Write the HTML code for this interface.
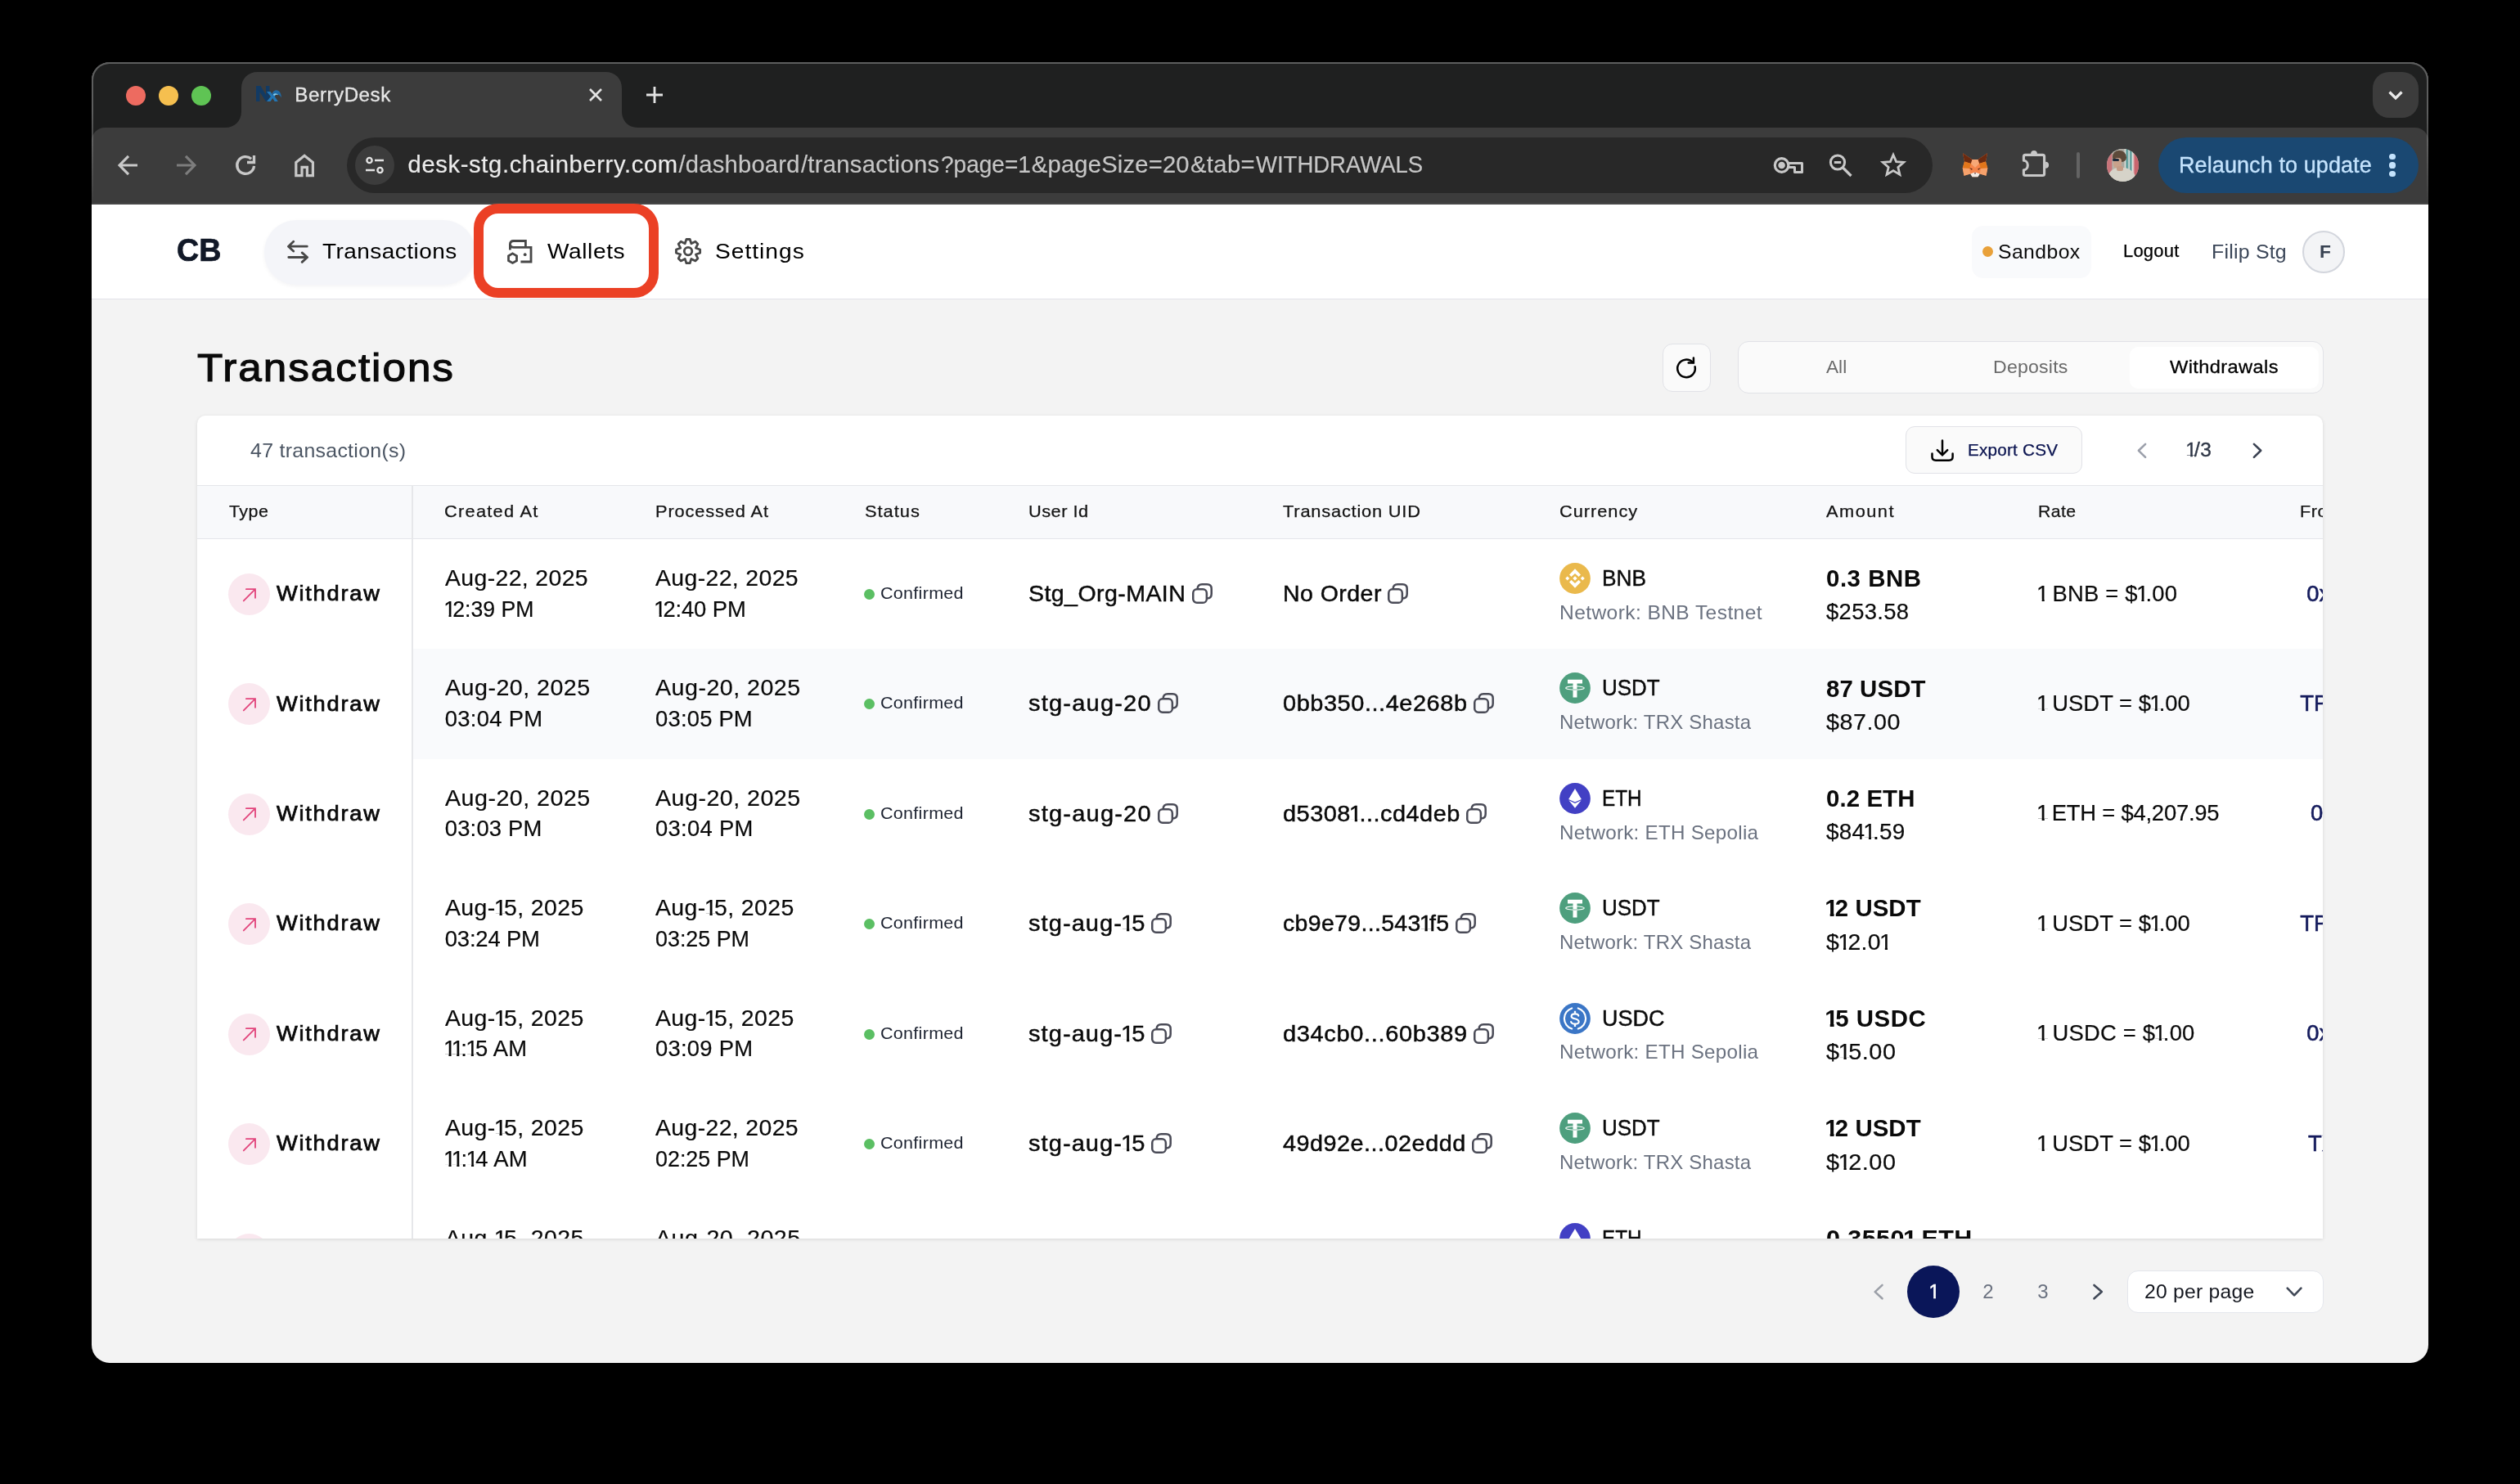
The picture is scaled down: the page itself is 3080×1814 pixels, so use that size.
<!DOCTYPE html>
<html lang="en"><head><meta charset="utf-8"><title>BerryDesk</title><style>
html,body{margin:0;padding:0;background:#000;}
body{width:3080px;height:1814px;position:relative;overflow:hidden;font-family:"Liberation Sans",sans-serif;}
.b{position:absolute;display:block;}
#root{position:absolute;left:0;top:0;width:3080px;height:1814px;will-change:transform;}
.t{position:absolute;white-space:nowrap;line-height:1;transform-origin:0 50%;}
.o,.ob{display:inline-block;margin:0 -.14em 0 -.07em;clip-path:polygon(0 0,1em 0,1em .748em,.352em .748em,.352em 1.3em,.24em 1.3em,.24em .748em,0 .748em);}
.ob{margin:0 -.13em 0 -.06em;clip-path:polygon(0 0,1em 0,1em .722em,.385em .722em,.385em 1.3em,.22em 1.3em,.22em .722em,0 .722em);}
</style></head><body><div id="root">
<div class="b" style="left:112px;top:76px;width:2856px;height:1590px;border-radius:22px;overflow:hidden;background:#f3f3f3;">
<div class="b" style="left:-112px;top:-76px;width:3080px;height:1814px;">
<div class="b" style="left:112.0px;top:76.0px;width:2856.0px;height:110.0px;background:#1f2020;"></div>
<div class="b" style="left:112.0px;top:156.0px;width:2856.0px;height:94.0px;background:#3c3c3c;border-radius:16px 16px 0 0;"></div>
<div class="b" style="left:112.0px;top:248.0px;width:2856.0px;height:2.0px;background:#464646;"></div>
<svg class="b" style="left:270.0px;top:88.0px;" width="520" height="68" viewBox="0 0 520 68" fill="none"><path d="M5 68 C17 68 25 60 25 48 L25 20 C25 8 33 0 45 0 L470 0 C482 0 490 8 490 20 L490 48 C490 60 498 68 510 68 Z" fill="#3c3c3c"/></svg>
<div class="b" style="left:154.0px;top:105.0px;width:24.0px;height:24.0px;background:#ed6b60;border-radius:12px;"></div>
<div class="b" style="left:194.0px;top:105.0px;width:24.0px;height:24.0px;background:#f5bf4f;border-radius:12px;"></div>
<div class="b" style="left:234.0px;top:105.0px;width:24.0px;height:24.0px;background:#5fc454;border-radius:12px;"></div>
<svg class="b" style="left:312.0px;top:103.0px;" width="34" height="24" viewBox="0 0 34 24" fill="none"><path d="M1 2 L6.5 2 L13 13 L13 2 L17.5 2 L17.5 21 L13 21 L5.5 9.5 L5.5 21 L1 21 Z" fill="#123a63"/><path d="M14 9 L18.5 9 L21.5 13.2 L24.5 9 L27.5 9 L23.8 15 L27.800 21 L23.600 21 L21.3 17 L18.5 21 L14 21 L19 15 Z" fill="#2276b5"/><path d="M20.5 11.500 C23 5.200 31.500 5.200 32 16.800 C30 11.800 25.500 10.800 22.800 14 Z" fill="#1f6aa5"/><path d="M21.800 12.600 C23.800 10.600 26.600 10.800 28.200 13.300 C26.200 12.200 24.400 12.600 23 14.200 Z" fill="#8fd0ea"/></svg>
<div class="t" style="left:360.30px;top:103.91px;font-size:24.2px;color:#e6e6e6;letter-spacing:0.512px;-webkit-text-stroke:0.3px #e6e6e6;">BerryDesk</div>
<svg class="b" style="left:718.0px;top:106.0px;" width="20" height="20" viewBox="0 0 20 20" fill="none"><path d="M3 3 L17 17 M17 3 L3 17" stroke="#e3e3e3" stroke-width="2.6" stroke-linecap="butt"/></svg>
<svg class="b" style="left:788.0px;top:104.0px;" width="24" height="24" viewBox="0 0 24 24" fill="none"><path d="M12 2 L12 22 M2 12 L22 12" stroke="#e3e3e3" stroke-width="2.8"/></svg>
<div class="b" style="left:2900.0px;top:88.0px;width:56.0px;height:56.0px;background:#3c3c3c;border-radius:20px;"></div>
<svg class="b" style="left:2916.0px;top:104.0px;" width="24" height="24" viewBox="0 0 24 24" fill="none"><path d="M4.5 8.5 L12 16 L19.5 8.5" stroke="#eaeaea" stroke-width="3.2"/></svg>
<svg class="b" style="left:142.0px;top:188.0px;" width="28" height="28" viewBox="0 0 28 28" fill="none"><path d="M26 14 L5 14 M15 2.800 L4 14 L15 25.200" stroke="#c8c8c8" stroke-width="3.1" stroke-linejoin="miter"/></svg>
<svg class="b" style="left:214.0px;top:188.0px;" width="28" height="28" viewBox="0 0 28 28" fill="none"><path d="M2 14 L23 14 M13 2.800 L24 14 L13 25.200" stroke="#7d7d7d" stroke-width="3.1"/></svg>
<svg class="b" style="left:286.0px;top:188.0px;" width="28" height="28" viewBox="0 0 28 28" fill="none"><path d="M24.51 14.91 A10.4 10.4 0 1 1 21.11 6.27" stroke="#c8c8c8" stroke-width="3.3"/><path d="M24.500 1.900 L24.500 10.500 L16 10.500" stroke="#c8c8c8" stroke-width="3.3" fill="none" stroke-linejoin="miter"/></svg>
<svg class="b" style="left:358.0px;top:186.0px;" width="28" height="32" viewBox="0 0 28 32" fill="none"><path d="M3.800 28.600 L3.800 12.400 L14.100 4.200 L24.400 12.400 L24.400 28.600 L17.400 28.600 L17.400 18.400 L11 18.400 L11 28.600 Z" stroke="#c8c8c8" stroke-width="3.2" stroke-linejoin="miter"/></svg>
<div class="b" style="left:424.0px;top:168.0px;width:1938.0px;height:68.0px;background:#282828;border-radius:34px;"></div>
<div class="b" style="left:434.0px;top:178.0px;width:48.0px;height:48.0px;background:#3c3c3c;border-radius:24px;"></div>
<svg class="b" style="left:444.0px;top:188.0px;" width="28" height="28" viewBox="0 0 28 28" fill="none"><circle cx="7.5" cy="8" r="3.1" stroke="#e3e3e3" stroke-width="2.4"/><path d="M14 8 L25 8" stroke="#e3e3e3" stroke-width="2.4"/><circle cx="20.5" cy="20" r="3.1" stroke="#e3e3e3" stroke-width="2.4"/><path d="M3 20 L14 20" stroke="#e3e3e3" stroke-width="2.4"/></svg>
<div class="t" style="left:498.60px;top:187.08px;font-size:29.2px;color:#ececec;letter-spacing:0.624px;-webkit-text-stroke:0.2px #ececec;">desk-stg.chainberry.com</div>
<div class="t" style="left:829.50px;top:187.08px;font-size:29.2px;color:#c6c6c6;letter-spacing:0.215px;-webkit-text-stroke:0.2px #c6c6c6;">/dashboard</div>
<div class="t" style="left:978.90px;top:187.08px;font-size:29.2px;color:#c6c6c6;letter-spacing:0.310px;-webkit-text-stroke:0.2px #c6c6c6;">/transactions</div>
<div class="t" style="left:1149.50px;top:187.08px;font-size:29.2px;color:#c6c6c6;-webkit-text-stroke:0.2px #c6c6c6;transform:scaleX(0.9602);">?page=1</div>
<div class="t" style="left:1260.80px;top:187.08px;font-size:29.2px;color:#c6c6c6;letter-spacing:0.191px;-webkit-text-stroke:0.2px #c6c6c6;">&amp;pageSize=20</div>
<div class="t" style="left:1455.00px;top:187.08px;font-size:29.2px;color:#c6c6c6;letter-spacing:0.377px;-webkit-text-stroke:0.2px #c6c6c6;">&amp;tab=</div>
<div class="t" style="left:1535.00px;top:187.08px;font-size:29.2px;color:#c6c6c6;-webkit-text-stroke:0.2px #c6c6c6;transform:scaleX(0.9421);">WITHDRAWALS</div>
<svg class="b" style="left:2166.0px;top:188.0px;" width="40" height="28" viewBox="0 0 40 28" fill="none"><circle cx="11.6" cy="14" r="8.3" stroke="#c8c8c8" stroke-width="3.2"/><circle cx="11.6" cy="14" r="4.3" fill="#c8c8c8"/><path d="M19.6 11.4 L36.5 11.4 L36.5 22.400 L27.5 22.400 L27.5 16.6 L19.600 16.6" stroke="#c8c8c8" stroke-width="3" stroke-linejoin="round"/></svg>
<svg class="b" style="left:2233.2px;top:185.6px;" width="32" height="32" viewBox="0 0 32 32" fill="none"><circle cx="13" cy="12.5" r="8.600" stroke="#c8c8c8" stroke-width="3"/><path d="M19.500 19 L29.500 29" stroke="#c8c8c8" stroke-width="3.200"/><path d="M8.800 12.500 L17.200 12.500" stroke="#c8c8c8" stroke-width="3"/></svg>
<svg class="b" style="left:2297.0px;top:185.0px;" width="34" height="32" viewBox="0 0 34 32" fill="none"><g transform="translate(17 17) scale(0.925) translate(-17 -17)"><path d="M17 3.2 L20.9 12.3 L30.8 13.1 L23.3 19.6 L25.6 29.3 L17 24.1 L8.4 29.3 L10.7 19.6 L3.2 13.1 L13.1 12.3 Z" stroke="#c8c8c8" stroke-width="3" stroke-linejoin="miter"/></g></svg>
<svg class="b" style="left:2398.0px;top:186.0px;" width="32" height="32" viewBox="0 0 32 32" fill="none"><path d="M1 1.3 L12.500 9 L19.500 9 L31 1.300 L29 11.500 L31.300 19.500 L29.500 28.700 L21.700 26.500 L19.500 30.300 L12.500 30.300 L10.300 26.500 L2.500 28.700 L0.700 19.500 L3 11.500 Z" fill="#f5844b"/><path d="M1 1.300 L12.500 9 L11 14 L3 11.500 Z" fill="#6b2a10"/><path d="M31 1.300 L19.500 9 L21 14 L29 11.500 Z" fill="#6b2a10"/><path d="M11 14 L12.500 9 L19.500 9 L21 14 L16 19 Z" fill="#f7a877"/><path d="M3 11.500 L11 14 L9 20 L0.700 19.500 Z" fill="#e2761b"/><path d="M29 11.500 L21 14 L23 20 L31.300 19.500 Z" fill="#e2761b"/><path d="M2.500 28.700 L10.300 26.500 L9 20 L0.700 19.500 Z" fill="#f6a26c"/><path d="M29.500 28.700 L21.700 26.500 L23 20 L31.300 19.500 Z" fill="#f6a26c"/><path d="M10.300 26.500 L16 24.500 L21.700 26.500 L19.500 30.300 L12.500 30.300 Z" fill="#f1ece8"/><path d="M9 19 L12.700 20.200 L12 22 Z M23 19 L19.300 20.200 L20 22 Z" fill="#5a2a14"/><path d="M14.800 25.300 L17.200 25.300 L16 27 Z" fill="#5a1a10"/></svg>
<svg class="b" style="left:2470.0px;top:183.0px;" width="38" height="36" viewBox="0 0 38 36" fill="none"><path d="M3.4 13.2 L3.4 8.4 Q3.4 6.4 5.4 6.4 L26.6 6.4 Q28.6 6.4 28.6 8.4 L28.6 29.5 Q28.6 31.5 26.6 31.5 L5.4 31.5 Q3.4 31.5 3.4 29.5 L3.4 24.700 A4.900 5.750 0 0 0 3.400 13.200 Z" stroke="#c8c8c8" stroke-width="3.1" stroke-linejoin="round"/><path d="M12.1 4.900 A3.900 3.900 0 0 1 19.900 4.900 Z M30.100 14.800 A4 4 0 0 1 30.100 22.800 Z" fill="#c8c8c8"/></svg>
<div class="b" style="left:2537.9px;top:186.0px;width:3.9px;height:31.8px;background:#636363;border-radius:2px;"></div>
<div class="b" style="left:2574.5px;top:182px;width:39.6px;height:39.6px;border-radius:20px;overflow:hidden;background:#b9b5ad;"><div class="b" style="left:0;top:0;width:40px;height:40px;background:linear-gradient(90deg,#c8747a 0,#c8747a 14%,#b8b4aa 18%,#aaa79e 52%,#dcdcd6 56%,#3f8f8c 62%,#dfe0dc 68%,#3f8f8c 73%,#e4e4e0 79%,#c9656e 86%,#c9656e 100%);"></div><div class="b" style="left:7.5px;top:2.4px;width:17px;height:14px;border-radius:8px 9px 6px 6px;background:#5d4a3a;"></div><div class="b" style="left:8.3px;top:10.5px;width:10.5px;height:13.5px;border-radius:5px 4px 5px 5px;background:#c9a28b;"></div><div class="b" style="left:7.2px;top:12px;width:8px;height:3.2px;border-radius:1.5px;background:#1c2b3d;"></div><div class="b" style="left:1.5px;top:22.5px;width:35px;height:20px;border-radius:14px 16px 0 0;background:#d6d3c9;"></div><div class="b" style="left:12px;top:21px;width:8px;height:6px;border-radius:2px;background:#c49c86;"></div></div>
<div class="b" style="left:2638.0px;top:168.0px;width:318.0px;height:68.0px;background:#1a4872;border-radius:34px;"></div>
<div class="t" style="left:2663.00px;top:189.14px;font-size:27px;color:#c4e3fd;letter-spacing:0.089px;-webkit-text-stroke:0.35px #c4e3fd;">Relaunch to update</div>
<div class="b" style="left:2920.4px;top:187.5px;width:7.2px;height:7.2px;background:#c4e3fd;border-radius:3.6px;"></div>
<div class="b" style="left:2920.4px;top:198.4px;width:7.2px;height:7.2px;background:#c4e3fd;border-radius:3.6px;"></div>
<div class="b" style="left:2920.4px;top:209.3px;width:7.2px;height:7.2px;background:#c4e3fd;border-radius:3.6px;"></div>
<div class="b" style="left:112px;top:76px;width:2856px;height:300px;border-radius:22px;box-sizing:border-box;border:2px solid rgba(255,255,255,0.28);border-bottom:none;-webkit-mask-image:linear-gradient(#000 0,#000 60px,transparent 176px);"></div>
<div class="b" style="left:112.0px;top:250.0px;width:2856.0px;height:115.2px;background:#fff;"></div>
<div class="b" style="left:112.0px;top:365.0px;width:2856.0px;height:1.2px;background:#e3e3e9;"></div>
<div class="t" style="left:215.60px;top:287.12px;font-size:38.6px;color:#111827;font-weight:700;-webkit-text-stroke:0.7px #111827;transform:scaleX(0.9761);">CB</div>
<div class="b" style="left:323.0px;top:269.0px;width:258.0px;height:78.6px;background:#f4f5f9;border-radius:39.3px;box-shadow:0 2px 5px rgba(20,20,60,0.05);"></div>
<div class="t" style="left:394.00px;top:293.68px;font-size:26.6px;color:#000;letter-spacing:0.451px;transform:scaleX(1.0517);">Transactions</div>
<div class="t" style="left:669.00px;top:293.68px;font-size:26.6px;color:#000;letter-spacing:0.529px;transform:scaleX(1.0584);">Wallets</div>
<div class="t" style="left:873.80px;top:293.68px;font-size:26.6px;color:#000;letter-spacing:0.935px;transform:scaleX(1.0600);">Settings</div>
<svg class="b" style="left:340.0px;top:280.0px;" width="60" height="56" viewBox="0 0 60 56" fill="none"><path d="M35.3 21.2 L12.8 21.2 M18.7 15.3 L12.5 21.2 L18.7 27.1 M12.8 34.5 L35.3 34.5 M29.2 28.9 L35.6 34.5 L29.2 40.4" stroke="#484848" stroke-width="2.8" stroke-linecap="round" stroke-linejoin="round"/></svg>
<svg class="b" style="left:610.0px;top:280.0px;" width="60" height="56" viewBox="0 0 60 56" fill="none"><path d="M13.4 25.6 L13.4 18.8 Q13.4 14.5 17.8 14.5 L32.4 14.5 L32.4 22.4 M13.4 18.4 Q13.6 22.4 18 22.4 L39 22.4 L39 40 L26.4 40" stroke="#484848" stroke-width="2.8" stroke-linejoin="miter"/><circle cx="31.7" cy="31.2" r="1.9" fill="#484848"/><path d="M16.5 29.9 L21.5 32.8 L21.5 38.6 L16.5 41.5 L11.5 38.6 L11.5 32.8 Z" stroke="#484848" stroke-width="2.8" stroke-linejoin="miter"/></svg>
<svg class="b" style="left:812.0px;top:280.0px;" width="60" height="56" viewBox="0 0 60 56" fill="none"><path d="M26.93 12.50 L31.19 12.50 L32.93 17.77 L37.87 15.27 L40.89 18.29 L38.39 23.23 L43.66 24.97 L43.66 29.23 L38.39 30.97 L40.89 35.91 L37.87 38.93 L32.93 36.43 L31.19 41.70 L26.93 41.70 L25.19 36.43 L20.25 38.93 L17.23 35.91 L19.73 30.97 L14.46 29.23 L14.46 24.97 L19.73 23.23 L17.23 18.29 L20.25 15.27 L25.19 17.77 Z" stroke="#484848" stroke-width="2.8" stroke-linejoin="round"/><circle cx="29.06" cy="27.1" r="4.75" stroke="#484848" stroke-width="2.8"/></svg>
<div class="b" style="left:579.0px;top:248.5px;width:225.5px;height:115.8px;background:transparent;border-radius:30px;border:12.3px solid #eb4025;box-sizing:border-box;"></div>
<div class="b" style="left:2410.0px;top:276.0px;width:146.0px;height:63.5px;background:#f9fafc;border-radius:14px;"></div>
<div class="b" style="left:2422.7px;top:301.0px;width:13.3px;height:13.3px;background:#e9a13a;border-radius:7px;"></div>
<div class="t" style="left:2442.40px;top:295.55px;font-size:23.8px;color:#0b0b0b;letter-spacing:0.400px;transform:scaleX(1.0399);">Sandbox</div>
<div class="t" style="left:2595.00px;top:297.28px;font-size:21.4px;color:#000;letter-spacing:0.223px;-webkit-text-stroke:0.25px #000;transform:scaleX(1.0262);">Logout</div>
<div class="t" style="left:2702.60px;top:295.91px;font-size:24.2px;color:#3b4658;letter-spacing:0.210px;transform:scaleX(1.0297);">Filip Stg</div>
<div class="b" style="left:2814.0px;top:281.6px;width:52.0px;height:52.0px;background:#f3f4f6;border-radius:26px;border:2.6px solid #d3d6dd;box-sizing:border-box;"></div>
<div class="t" style="left:2835.00px;top:296.40px;font-size:22.8px;color:#384252;font-weight:700;">F</div>
<div class="t" style="left:240.80px;top:424.52px;font-size:48.4px;color:#0a0a0a;letter-spacing:1.823px;-webkit-text-stroke:1.15px #0a0a0a;transform:scaleX(1.0600);">Transactions</div>
<div class="b" style="left:2032.3px;top:420.2px;width:58.5px;height:58.5px;background:#fafafa;border-radius:12px;border:1.2px solid #e1e2e7;box-sizing:border-box;"></div>
<svg class="b" style="left:2026.0px;top:414.0px;" width="72" height="72" viewBox="0 0 72 72" fill="none"><path d="M45.63 34.25 A10.8 10.8 0 1 1 43.08 29.17" stroke="#000" stroke-width="2.5" stroke-linecap="round"/><path d="M43.9 23.6 L43.9 29.6 L37.7 29.6" stroke="#000" stroke-width="2.5" stroke-linecap="round" stroke-linejoin="miter"/></svg>
<div class="b" style="left:2123.6px;top:417.2px;width:716.0px;height:63.4px;background:#fafafa;border-radius:13px;border:1.2px solid #e1e2e7;box-sizing:border-box;"></div>
<div class="b" style="left:2603.0px;top:424.0px;width:231.0px;height:50.6px;background:#fff;border-radius:10px;"></div>
<div class="t" style="left:2232.05px;top:437.66px;font-size:22.6px;color:#6a6a6a;">All</div>
<div class="t" style="left:2435.70px;top:437.66px;font-size:22.6px;color:#6a6a6a;letter-spacing:0.195px;transform:scaleX(1.0238);">Deposits</div>
<div class="t" style="left:2651.80px;top:437.66px;font-size:22.6px;color:#000;letter-spacing:0.361px;-webkit-text-stroke:0.3px #000;transform:scaleX(1.0461);">Withdrawals</div>
<div class="b" style="left:240.8px;top:508px;width:2598.2px;height:1006px;border-radius:10px 10px 0 0;background:#fff;box-shadow:0 1px 4px rgba(0,0,0,0.12);overflow:hidden;">
<div class="b" style="left:-240.8px;top:-508px;width:3080px;height:1814px;">
<div class="t" style="left:305.70px;top:539.28px;font-size:24px;color:#4b5563;letter-spacing:0.271px;transform:scaleX(1.0378);">47 transaction(s)</div>
<div class="b" style="left:2328.5px;top:521.3px;width:216.3px;height:58.2px;background:#fafafa;border-radius:11px;border:1.2px solid #e1e2e7;box-sizing:border-box;"></div>
<div class="t" style="left:2404.80px;top:539.60px;font-size:20.2px;color:#0b1450;letter-spacing:0.196px;-webkit-text-stroke:0.25px #0b1450;transform:scaleX(1.0258);">Export CSV</div>
<div class="t" style="left:2673.20px;top:539.34px;font-size:23.1px;color:#2f3747;letter-spacing:0.495px;-webkit-text-stroke:0.4px #2f3747;transform:scaleX(1.0576);"><span class="o">1</span>/3</div>
<svg class="b" style="left:2320.0px;top:514.0px;" width="100" height="72" viewBox="0 0 100 72" fill="none"><path d="M54 24.4 L54 42 M47.8 36.1 L54 42.3 L60.2 36.1 M41.5 40.6 L41.5 44.6 Q41.5 48.8 46 48.8 L62.1 48.8 Q66.6 48.8 66.6 44.6 L66.6 40.600" stroke="#000" stroke-width="2.5" stroke-linecap="round" stroke-linejoin="miter"/></svg>
<svg class="b" style="left:2590.0px;top:520.0px;" width="200" height="60" viewBox="0 0 200 60" fill="none"><path d="M32.1 22.9 L23.9 30.8 L32.100 38.9" stroke="#9ca0ab" stroke-width="2.6" stroke-linecap="round" stroke-linejoin="round"/><path d="M164.9 22.9 L173.2 30.8 L164.900 38.9" stroke="#3b4252" stroke-width="2.6" stroke-linecap="round" stroke-linejoin="round"/></svg>
<div class="b" style="left:240.8px;top:593.0px;width:2600.0px;height:65.4px;background:#f8f9fb;"></div>
<div class="b" style="left:240.8px;top:592.8px;width:2600.0px;height:1.2px;background:#e4e6ea;"></div>
<div class="b" style="left:240.8px;top:657.6px;width:2600.0px;height:1.2px;background:#e4e6ea;"></div>
<div class="t" style="left:280.00px;top:614.56px;font-size:20.6px;color:#141414;letter-spacing:0.414px;-webkit-text-stroke:0.25px #141414;transform:scaleX(1.0436);">Type</div>
<div class="t" style="left:543.20px;top:614.56px;font-size:20.6px;color:#141414;letter-spacing:1.169px;-webkit-text-stroke:0.25px #141414;transform:scaleX(1.0600);">Created At</div>
<div class="t" style="left:801.00px;top:614.56px;font-size:20.6px;color:#141414;letter-spacing:0.804px;-webkit-text-stroke:0.25px #141414;transform:scaleX(1.0600);">Processed At</div>
<div class="t" style="left:1056.80px;top:614.56px;font-size:20.6px;color:#141414;letter-spacing:0.926px;-webkit-text-stroke:0.25px #141414;transform:scaleX(1.0600);">Status</div>
<div class="t" style="left:1256.80px;top:614.56px;font-size:20.6px;color:#141414;letter-spacing:0.444px;-webkit-text-stroke:0.25px #141414;transform:scaleX(1.0600);">User Id</div>
<div class="t" style="left:1567.50px;top:614.56px;font-size:20.6px;color:#141414;letter-spacing:0.747px;-webkit-text-stroke:0.25px #141414;transform:scaleX(1.0600);">Transaction UID</div>
<div class="t" style="left:1906.20px;top:614.56px;font-size:20.6px;color:#141414;letter-spacing:0.895px;-webkit-text-stroke:0.25px #141414;transform:scaleX(1.0600);">Currency</div>
<div class="t" style="left:2232.00px;top:614.56px;font-size:20.6px;color:#141414;letter-spacing:1.369px;-webkit-text-stroke:0.25px #141414;transform:scaleX(1.0600);">Amount</div>
<div class="t" style="left:2491.00px;top:614.56px;font-size:20.6px;color:#141414;letter-spacing:0.320px;-webkit-text-stroke:0.25px #141414;transform:scaleX(1.0343);">Rate</div>
<div class="t" style="left:2811.30px;top:614.56px;font-size:20.6px;color:#141414;letter-spacing:0.502px;-webkit-text-stroke:0.25px #141414;transform:scaleX(1.0494);">From</div>
<div class="b" style="left:505.0px;top:793.0px;width:2336.0px;height:134.5px;background:#f9fafc;"></div>
<div class="b" style="left:503.0px;top:593.0px;width:2.0px;height:925.0px;background:#e6e7ea;"></div>
<div class="b" style="left:279.1px;top:701.0px;width:51.0px;height:51.0px;background:#fae8ef;border-radius:26px;"></div>
<svg class="b" style="left:292.6px;top:714.5px;" width="24" height="24" viewBox="-12 -12 24 24" fill="none"><path d="M-7.2 7.45 L7 -6.85 M-4.1 -6.85 L7 -6.85 L7 3.8" stroke="#e2457c" stroke-width="1.8" stroke-linecap="round" stroke-linejoin="miter"/></svg>
<div class="t" style="left:338.00px;top:713.14px;font-size:25.7px;color:#0a0a0a;letter-spacing:1.660px;-webkit-text-stroke:0.75px #0a0a0a;transform:scaleX(1.0600);">Withdraw</div>
<div class="t" style="left:543.80px;top:693.00px;font-size:27.4px;color:#0a0a0a;letter-spacing:0.355px;-webkit-text-stroke:0.2px #0a0a0a;transform:scaleX(1.0369);">Aug-22, 2025</div>
<div class="t" style="left:543.80px;top:730.50px;font-size:27.4px;color:#0a0a0a;-webkit-text-stroke:0.2px #0a0a0a;transform:scaleX(0.9730);"><span class="o">1</span>2:39 PM</div>
<div class="t" style="left:801.00px;top:693.00px;font-size:27.4px;color:#0a0a0a;letter-spacing:0.355px;-webkit-text-stroke:0.2px #0a0a0a;transform:scaleX(1.0369);">Aug-22, 2025</div>
<div class="t" style="left:801.00px;top:730.50px;font-size:27.4px;color:#0a0a0a;letter-spacing:-0.117px;-webkit-text-stroke:0.2px #0a0a0a;"><span class="o">1</span>2:40 PM</div>
<div class="b" style="left:1056.0px;top:720.0px;width:13.0px;height:13.0px;background:#5bbf63;border-radius:7px;"></div>
<div class="t" style="left:1076.40px;top:714.89px;font-size:20.8px;color:#1c2230;letter-spacing:0.273px;transform:scaleX(1.0354);">Confirmed</div>
<div class="t" style="left:1257.20px;top:711.90px;font-size:27.4px;color:#0a0a0a;letter-spacing:0.426px;-webkit-text-stroke:0.45px #0a0a0a;transform:scaleX(1.0407);">Stg_Org-MAIN</div>
<svg class="b" style="left:1456.9px;top:713.0px;" width="26" height="26" viewBox="0 0 26 26" fill="none"><rect x="1.25" y="7.3" width="16.6" height="16.5" rx="4.6" stroke="#4a4b57" stroke-width="2.5"/><path d="M6.7 7.0 L6.7 6.7 Q6.7 1.25 12.2 1.25 L18.2 1.25 Q23.7 1.25 23.7 6.7 L23.7 13.1 Q23.7 18.6 18.2 18.6 L18.1 18.6" stroke="#4a4b57" stroke-width="2.5"/></svg>
<div class="t" style="left:1567.80px;top:711.90px;font-size:27.4px;color:#0a0a0a;letter-spacing:0.426px;-webkit-text-stroke:0.45px #0a0a0a;transform:scaleX(1.0413);">No Order</div>
<svg class="b" style="left:1696.2px;top:713.0px;" width="26" height="26" viewBox="0 0 26 26" fill="none"><rect x="1.25" y="7.3" width="16.6" height="16.5" rx="4.6" stroke="#4a4b57" stroke-width="2.5"/><path d="M6.7 7.0 L6.7 6.7 Q6.7 1.25 12.2 1.25 L18.2 1.25 Q23.7 1.25 23.7 6.7 L23.7 13.1 Q23.7 18.6 18.2 18.6 L18.1 18.6" stroke="#4a4b57" stroke-width="2.5"/></svg>
<svg class="b" style="left:1905.0px;top:686.9px;" width="40" height="40" viewBox="-20 -20 40 40" fill="none"><circle cx="0" cy="0" r="18.9" fill="#eab94c"/><path d="M0 -11.8 L7 -4.6 L4.5 -2.1 L0 -6.1 L-4.5 -2.1 L-7 -4.6 Z M0 11.8 L7 4.6 L4.5 2.1 L0 6.1 L-4.5 2.1 L-7 4.6 Z M0 -2.7 L2.7 0 L0 2.7 L-2.7 0 Z M-9.3 -2.5 L-6.8 0 L-9.3 2.5 L-11.8 0 Z M9.3 -2.5 L11.8 0 L9.3 2.5 L6.8 0 Z" fill="#fff"/></svg>
<div class="t" style="left:1958.00px;top:693.00px;font-size:27.4px;color:#0a0a0a;-webkit-text-stroke:0.45px #0a0a0a;transform:scaleX(0.9587);">BNB</div>
<div class="t" style="left:1906.20px;top:737.69px;font-size:23.4px;color:#6b7280;letter-spacing:0.385px;transform:scaleX(1.0505);">Network: BNB Testnet</div>
<div class="t" style="left:2232.00px;top:692.11px;font-size:29.4px;color:#0a0a0a;font-weight:700;letter-spacing:0.549px;">0.3 BNB</div>
<div class="t" style="left:2232.00px;top:734.30px;font-size:27.4px;color:#0a0a0a;letter-spacing:0.331px;-webkit-text-stroke:0.2px #0a0a0a;">$253.58</div>
<div class="t" style="left:2491.00px;top:711.60px;font-size:27.4px;color:#0a0a0a;letter-spacing:0.211px;-webkit-text-stroke:0.2px #0a0a0a;"><span class="o">1</span> BNB = $<span class="o">1</span>.00</div>
<div class="t" style="left:2819.30px;top:711.60px;font-size:27.4px;color:#141b5c;-webkit-text-stroke:0.6px #141b5c;">0x</div>
<div class="b" style="left:279.1px;top:835.4px;width:51.0px;height:51.0px;background:#fae8ef;border-radius:26px;"></div>
<svg class="b" style="left:292.6px;top:848.9px;" width="24" height="24" viewBox="-12 -12 24 24" fill="none"><path d="M-7.2 7.45 L7 -6.85 M-4.1 -6.85 L7 -6.85 L7 3.8" stroke="#e2457c" stroke-width="1.8" stroke-linecap="round" stroke-linejoin="miter"/></svg>
<div class="t" style="left:338.00px;top:847.58px;font-size:25.7px;color:#0a0a0a;letter-spacing:1.660px;-webkit-text-stroke:0.75px #0a0a0a;transform:scaleX(1.0600);">Withdraw</div>
<div class="t" style="left:543.80px;top:827.44px;font-size:27.4px;color:#0a0a0a;letter-spacing:0.442px;-webkit-text-stroke:0.2px #0a0a0a;transform:scaleX(1.0464);">Aug-20, 2025</div>
<div class="t" style="left:543.80px;top:864.94px;font-size:27.4px;color:#0a0a0a;letter-spacing:0.293px;-webkit-text-stroke:0.2px #0a0a0a;">03:04 PM</div>
<div class="t" style="left:801.00px;top:827.44px;font-size:27.4px;color:#0a0a0a;letter-spacing:0.442px;-webkit-text-stroke:0.2px #0a0a0a;transform:scaleX(1.0464);">Aug-20, 2025</div>
<div class="t" style="left:801.00px;top:864.94px;font-size:27.4px;color:#0a0a0a;letter-spacing:0.207px;-webkit-text-stroke:0.2px #0a0a0a;">03:05 PM</div>
<div class="b" style="left:1056.0px;top:854.4px;width:13.0px;height:13.0px;background:#5bbf63;border-radius:7px;"></div>
<div class="t" style="left:1076.40px;top:849.33px;font-size:20.8px;color:#1c2230;letter-spacing:0.273px;transform:scaleX(1.0354);">Confirmed</div>
<div class="t" style="left:1257.20px;top:846.34px;font-size:27.4px;color:#0a0a0a;letter-spacing:1.131px;-webkit-text-stroke:0.45px #0a0a0a;transform:scaleX(1.0600);">stg-aug-20</div>
<svg class="b" style="left:1414.7px;top:847.4px;" width="26" height="26" viewBox="0 0 26 26" fill="none"><rect x="1.25" y="7.3" width="16.6" height="16.5" rx="4.6" stroke="#4a4b57" stroke-width="2.5"/><path d="M6.7 7.0 L6.7 6.7 Q6.7 1.25 12.2 1.25 L18.2 1.25 Q23.7 1.25 23.7 6.7 L23.7 13.1 Q23.7 18.6 18.2 18.6 L18.1 18.6" stroke="#4a4b57" stroke-width="2.5"/></svg>
<div class="t" style="left:1567.80px;top:846.34px;font-size:27.4px;color:#0a0a0a;letter-spacing:0.524px;-webkit-text-stroke:0.45px #0a0a0a;transform:scaleX(1.0565);">0bb350...4e268b</div>
<svg class="b" style="left:1800.8px;top:847.4px;" width="26" height="26" viewBox="0 0 26 26" fill="none"><rect x="1.25" y="7.3" width="16.6" height="16.5" rx="4.6" stroke="#4a4b57" stroke-width="2.5"/><path d="M6.7 7.0 L6.7 6.7 Q6.7 1.25 12.2 1.25 L18.2 1.25 Q23.7 1.25 23.7 6.7 L23.7 13.1 Q23.7 18.6 18.2 18.6 L18.1 18.6" stroke="#4a4b57" stroke-width="2.5"/></svg>
<svg class="b" style="left:1905.0px;top:821.3px;" width="40" height="40" viewBox="-20 -20 40 40" fill="none"><circle cx="0" cy="0" r="18.9" fill="#4e9f7e"/><ellipse cx="0" cy="0" rx="11.3" ry="2.2" stroke="#fff" stroke-width="1.1" fill="none"/><path d="M-9 -10.3 L9 -10.3 L9 -5.6 L2.5 -5.6 L2.5 11.4 L-2.5 11.4 L-2.5 -5.6 L-9 -5.6 Z" fill="#fff"/><path d="M-2.5 1.9 Q0 2.3 2.5 1.9" stroke="#4e9f7e" stroke-width="0.7" fill="none"/></svg>
<div class="t" style="left:1958.00px;top:827.44px;font-size:27.4px;color:#0a0a0a;-webkit-text-stroke:0.45px #0a0a0a;transform:scaleX(0.9482);">USDT</div>
<div class="t" style="left:1906.20px;top:872.13px;font-size:23.4px;color:#6b7280;letter-spacing:0.209px;transform:scaleX(1.0257);">Network: TRX Shasta</div>
<div class="t" style="left:2232.00px;top:826.55px;font-size:29.4px;color:#0a0a0a;font-weight:700;letter-spacing:0.088px;">87 USDT</div>
<div class="t" style="left:2232.00px;top:868.74px;font-size:27.4px;color:#0a0a0a;letter-spacing:0.513px;-webkit-text-stroke:0.2px #0a0a0a;transform:scaleX(1.0481);">$87.00</div>
<div class="t" style="left:2491.00px;top:846.04px;font-size:27.4px;color:#0a0a0a;letter-spacing:0.045px;-webkit-text-stroke:0.2px #0a0a0a;"><span class="o">1</span> USDT = $<span class="o">1</span>.00</div>
<div class="t" style="left:2811.30px;top:846.04px;font-size:27.4px;color:#141b5c;-webkit-text-stroke:0.6px #141b5c;">TP</div>
<div class="b" style="left:279.1px;top:969.8px;width:51.0px;height:51.0px;background:#fae8ef;border-radius:26px;"></div>
<svg class="b" style="left:292.6px;top:983.3px;" width="24" height="24" viewBox="-12 -12 24 24" fill="none"><path d="M-7.2 7.45 L7 -6.85 M-4.1 -6.85 L7 -6.85 L7 3.8" stroke="#e2457c" stroke-width="1.8" stroke-linecap="round" stroke-linejoin="miter"/></svg>
<div class="t" style="left:338.00px;top:982.02px;font-size:25.7px;color:#0a0a0a;letter-spacing:1.660px;-webkit-text-stroke:0.75px #0a0a0a;transform:scaleX(1.0600);">Withdraw</div>
<div class="t" style="left:543.80px;top:961.88px;font-size:27.4px;color:#0a0a0a;letter-spacing:0.442px;-webkit-text-stroke:0.2px #0a0a0a;transform:scaleX(1.0464);">Aug-20, 2025</div>
<div class="t" style="left:543.80px;top:999.38px;font-size:27.4px;color:#0a0a0a;letter-spacing:0.179px;-webkit-text-stroke:0.2px #0a0a0a;">03:03 PM</div>
<div class="t" style="left:801.00px;top:961.88px;font-size:27.4px;color:#0a0a0a;letter-spacing:0.442px;-webkit-text-stroke:0.2px #0a0a0a;transform:scaleX(1.0464);">Aug-20, 2025</div>
<div class="t" style="left:801.00px;top:999.38px;font-size:27.4px;color:#0a0a0a;letter-spacing:0.293px;-webkit-text-stroke:0.2px #0a0a0a;">03:04 PM</div>
<div class="b" style="left:1056.0px;top:988.9px;width:13.0px;height:13.0px;background:#5bbf63;border-radius:7px;"></div>
<div class="t" style="left:1076.40px;top:983.77px;font-size:20.8px;color:#1c2230;letter-spacing:0.273px;transform:scaleX(1.0354);">Confirmed</div>
<div class="t" style="left:1257.20px;top:980.78px;font-size:27.4px;color:#0a0a0a;letter-spacing:1.131px;-webkit-text-stroke:0.45px #0a0a0a;transform:scaleX(1.0600);">stg-aug-20</div>
<svg class="b" style="left:1414.7px;top:981.9px;" width="26" height="26" viewBox="0 0 26 26" fill="none"><rect x="1.25" y="7.3" width="16.6" height="16.5" rx="4.6" stroke="#4a4b57" stroke-width="2.5"/><path d="M6.7 7.0 L6.7 6.7 Q6.7 1.25 12.2 1.25 L18.2 1.25 Q23.7 1.25 23.7 6.7 L23.7 13.1 Q23.7 18.6 18.2 18.6 L18.1 18.6" stroke="#4a4b57" stroke-width="2.5"/></svg>
<div class="t" style="left:1567.80px;top:980.78px;font-size:27.4px;color:#0a0a0a;letter-spacing:0.486px;-webkit-text-stroke:0.45px #0a0a0a;transform:scaleX(1.0542);">d5308<span class="o">1</span>...cd4deb</div>
<svg class="b" style="left:1792.1px;top:981.9px;" width="26" height="26" viewBox="0 0 26 26" fill="none"><rect x="1.25" y="7.3" width="16.6" height="16.5" rx="4.6" stroke="#4a4b57" stroke-width="2.5"/><path d="M6.7 7.0 L6.7 6.7 Q6.7 1.25 12.2 1.25 L18.2 1.25 Q23.7 1.25 23.7 6.7 L23.7 13.1 Q23.7 18.6 18.2 18.6 L18.1 18.6" stroke="#4a4b57" stroke-width="2.5"/></svg>
<svg class="b" style="left:1905.0px;top:955.8px;" width="40" height="40" viewBox="-20 -20 40 40" fill="none"><circle cx="0" cy="0" r="18.9" fill="#4240c4"/><path d="M0 -12 L7.9 1 L0 4.6 L-7.9 1 Z" fill="#fff"/><path d="M-7.6 2.3 L0 6 L7.6 2.3 L0 11.8 Z" fill="#fff"/></svg>
<div class="t" style="left:1958.00px;top:961.88px;font-size:27.4px;color:#0a0a0a;-webkit-text-stroke:0.45px #0a0a0a;transform:scaleX(0.8851);">ETH</div>
<div class="t" style="left:1906.20px;top:1006.57px;font-size:23.4px;color:#6b7280;letter-spacing:0.263px;transform:scaleX(1.0337);">Network: ETH Sepolia</div>
<div class="t" style="left:2232.00px;top:960.99px;font-size:29.4px;color:#0a0a0a;font-weight:700;letter-spacing:0.098px;">0.2 ETH</div>
<div class="t" style="left:2232.00px;top:1003.18px;font-size:27.4px;color:#0a0a0a;letter-spacing:0.191px;-webkit-text-stroke:0.2px #0a0a0a;transform:scaleX(1.0188);">$84<span class="o">1</span>.59</div>
<div class="t" style="left:2491.00px;top:980.48px;font-size:27.4px;color:#0a0a0a;letter-spacing:-0.211px;-webkit-text-stroke:0.2px #0a0a0a;"><span class="o">1</span> ETH = $4,207.95</div>
<div class="t" style="left:2824.00px;top:980.48px;font-size:27.4px;color:#141b5c;-webkit-text-stroke:0.6px #141b5c;">0x</div>
<div class="b" style="left:279.1px;top:1104.3px;width:51.0px;height:51.0px;background:#fae8ef;border-radius:26px;"></div>
<svg class="b" style="left:292.6px;top:1117.8px;" width="24" height="24" viewBox="-12 -12 24 24" fill="none"><path d="M-7.2 7.45 L7 -6.85 M-4.1 -6.85 L7 -6.85 L7 3.8" stroke="#e2457c" stroke-width="1.8" stroke-linecap="round" stroke-linejoin="miter"/></svg>
<div class="t" style="left:338.00px;top:1116.46px;font-size:25.7px;color:#0a0a0a;letter-spacing:1.660px;-webkit-text-stroke:0.75px #0a0a0a;transform:scaleX(1.0600);">Withdraw</div>
<div class="t" style="left:543.80px;top:1096.32px;font-size:27.4px;color:#0a0a0a;letter-spacing:0.366px;-webkit-text-stroke:0.2px #0a0a0a;transform:scaleX(1.0395);">Aug-<span class="o">1</span>5, 2025</div>
<div class="t" style="left:543.80px;top:1133.82px;font-size:27.4px;color:#0a0a0a;letter-spacing:-0.179px;-webkit-text-stroke:0.2px #0a0a0a;">03:24 PM</div>
<div class="t" style="left:801.00px;top:1096.32px;font-size:27.4px;color:#0a0a0a;letter-spacing:0.366px;-webkit-text-stroke:0.2px #0a0a0a;transform:scaleX(1.0395);">Aug-<span class="o">1</span>5, 2025</div>
<div class="t" style="left:801.00px;top:1133.82px;font-size:27.4px;color:#0a0a0a;-webkit-text-stroke:0.2px #0a0a0a;transform:scaleX(0.9808);">03:25 PM</div>
<div class="b" style="left:1056.0px;top:1123.3px;width:13.0px;height:13.0px;background:#5bbf63;border-radius:7px;"></div>
<div class="t" style="left:1076.40px;top:1118.21px;font-size:20.8px;color:#1c2230;letter-spacing:0.273px;transform:scaleX(1.0354);">Confirmed</div>
<div class="t" style="left:1257.20px;top:1115.22px;font-size:27.4px;color:#0a0a0a;letter-spacing:1.003px;-webkit-text-stroke:0.45px #0a0a0a;transform:scaleX(1.0600);">stg-aug-<span class="o">1</span>5</div>
<svg class="b" style="left:1407.4px;top:1116.3px;" width="26" height="26" viewBox="0 0 26 26" fill="none"><rect x="1.25" y="7.3" width="16.6" height="16.5" rx="4.6" stroke="#4a4b57" stroke-width="2.5"/><path d="M6.7 7.0 L6.7 6.7 Q6.7 1.25 12.2 1.25 L18.2 1.25 Q23.7 1.25 23.7 6.7 L23.7 13.1 Q23.7 18.6 18.2 18.6 L18.1 18.6" stroke="#4a4b57" stroke-width="2.5"/></svg>
<div class="t" style="left:1567.80px;top:1115.22px;font-size:27.4px;color:#0a0a0a;letter-spacing:0.337px;-webkit-text-stroke:0.45px #0a0a0a;transform:scaleX(1.0385);">cb9e79...543<span class="o">1</span>f5</div>
<svg class="b" style="left:1778.8px;top:1116.3px;" width="26" height="26" viewBox="0 0 26 26" fill="none"><rect x="1.25" y="7.3" width="16.6" height="16.5" rx="4.6" stroke="#4a4b57" stroke-width="2.5"/><path d="M6.7 7.0 L6.7 6.7 Q6.7 1.25 12.2 1.25 L18.2 1.25 Q23.7 1.25 23.7 6.7 L23.7 13.1 Q23.7 18.6 18.2 18.6 L18.1 18.6" stroke="#4a4b57" stroke-width="2.5"/></svg>
<svg class="b" style="left:1905.0px;top:1090.2px;" width="40" height="40" viewBox="-20 -20 40 40" fill="none"><circle cx="0" cy="0" r="18.9" fill="#4e9f7e"/><ellipse cx="0" cy="0" rx="11.3" ry="2.2" stroke="#fff" stroke-width="1.1" fill="none"/><path d="M-9 -10.3 L9 -10.3 L9 -5.6 L2.5 -5.6 L2.5 11.4 L-2.5 11.4 L-2.5 -5.6 L-9 -5.6 Z" fill="#fff"/><path d="M-2.5 1.9 Q0 2.3 2.5 1.9" stroke="#4e9f7e" stroke-width="0.7" fill="none"/></svg>
<div class="t" style="left:1958.00px;top:1096.32px;font-size:27.4px;color:#0a0a0a;-webkit-text-stroke:0.45px #0a0a0a;transform:scaleX(0.9482);">USDT</div>
<div class="t" style="left:1906.20px;top:1141.01px;font-size:23.4px;color:#6b7280;letter-spacing:0.209px;transform:scaleX(1.0257);">Network: TRX Shasta</div>
<div class="t" style="left:2232.00px;top:1095.43px;font-size:29.4px;color:#0a0a0a;font-weight:700;letter-spacing:0.045px;"><span class="ob">1</span>2 USDT</div>
<div class="t" style="left:2232.00px;top:1137.62px;font-size:27.4px;color:#0a0a0a;letter-spacing:0.346px;-webkit-text-stroke:0.2px #0a0a0a;transform:scaleX(1.0372);">$<span class="o">1</span>2.0<span class="o">1</span></div>
<div class="t" style="left:2491.00px;top:1114.92px;font-size:27.4px;color:#0a0a0a;letter-spacing:0.045px;-webkit-text-stroke:0.2px #0a0a0a;"><span class="o">1</span> USDT = $<span class="o">1</span>.00</div>
<div class="t" style="left:2811.30px;top:1114.92px;font-size:27.4px;color:#141b5c;-webkit-text-stroke:0.6px #141b5c;">TP</div>
<div class="b" style="left:279.1px;top:1238.7px;width:51.0px;height:51.0px;background:#fae8ef;border-radius:26px;"></div>
<svg class="b" style="left:292.6px;top:1252.2px;" width="24" height="24" viewBox="-12 -12 24 24" fill="none"><path d="M-7.2 7.45 L7 -6.85 M-4.1 -6.85 L7 -6.85 L7 3.8" stroke="#e2457c" stroke-width="1.8" stroke-linecap="round" stroke-linejoin="miter"/></svg>
<div class="t" style="left:338.00px;top:1250.90px;font-size:25.7px;color:#0a0a0a;letter-spacing:1.660px;-webkit-text-stroke:0.75px #0a0a0a;transform:scaleX(1.0600);">Withdraw</div>
<div class="t" style="left:543.80px;top:1230.76px;font-size:27.4px;color:#0a0a0a;letter-spacing:0.366px;-webkit-text-stroke:0.2px #0a0a0a;transform:scaleX(1.0395);">Aug-<span class="o">1</span>5, 2025</div>
<div class="t" style="left:543.80px;top:1268.26px;font-size:27.4px;color:#0a0a0a;letter-spacing:0.236px;-webkit-text-stroke:0.2px #0a0a0a;"><span class="o">1</span><span class="o">1</span>:<span class="o">1</span>5 AM</div>
<div class="t" style="left:801.00px;top:1230.76px;font-size:27.4px;color:#0a0a0a;letter-spacing:0.366px;-webkit-text-stroke:0.2px #0a0a0a;transform:scaleX(1.0395);">Aug-<span class="o">1</span>5, 2025</div>
<div class="t" style="left:801.00px;top:1268.26px;font-size:27.4px;color:#0a0a0a;letter-spacing:0.250px;-webkit-text-stroke:0.2px #0a0a0a;">03:09 PM</div>
<div class="b" style="left:1056.0px;top:1257.8px;width:13.0px;height:13.0px;background:#5bbf63;border-radius:7px;"></div>
<div class="t" style="left:1076.40px;top:1252.65px;font-size:20.8px;color:#1c2230;letter-spacing:0.273px;transform:scaleX(1.0354);">Confirmed</div>
<div class="t" style="left:1257.20px;top:1249.66px;font-size:27.4px;color:#0a0a0a;letter-spacing:1.003px;-webkit-text-stroke:0.45px #0a0a0a;transform:scaleX(1.0600);">stg-aug-<span class="o">1</span>5</div>
<svg class="b" style="left:1407.4px;top:1250.8px;" width="26" height="26" viewBox="0 0 26 26" fill="none"><rect x="1.25" y="7.3" width="16.6" height="16.5" rx="4.6" stroke="#4a4b57" stroke-width="2.5"/><path d="M6.7 7.0 L6.7 6.7 Q6.7 1.25 12.2 1.25 L18.2 1.25 Q23.7 1.25 23.7 6.7 L23.7 13.1 Q23.7 18.6 18.2 18.6 L18.1 18.6" stroke="#4a4b57" stroke-width="2.5"/></svg>
<div class="t" style="left:1567.80px;top:1249.66px;font-size:27.4px;color:#0a0a0a;letter-spacing:0.597px;-webkit-text-stroke:0.45px #0a0a0a;transform:scaleX(1.0600);">d34cb0...60b389</div>
<svg class="b" style="left:1801.0px;top:1250.8px;" width="26" height="26" viewBox="0 0 26 26" fill="none"><rect x="1.25" y="7.3" width="16.6" height="16.5" rx="4.6" stroke="#4a4b57" stroke-width="2.5"/><path d="M6.7 7.0 L6.7 6.7 Q6.7 1.25 12.2 1.25 L18.2 1.25 Q23.7 1.25 23.7 6.7 L23.7 13.1 Q23.7 18.6 18.2 18.6 L18.1 18.6" stroke="#4a4b57" stroke-width="2.5"/></svg>
<svg class="b" style="left:1905.0px;top:1224.7px;" width="40" height="40" viewBox="-20 -20 40 40" fill="none"><circle cx="0" cy="0" r="18.9" fill="#3b76c6"/><path d="M3.83 -12.53 A13.1 13.1 0 0 1 3.83 12.53 M-3.83 -12.53 A13.1 13.1 0 0 0 -3.83 12.53" stroke="#fff" stroke-width="2.2" stroke-linecap="round"/><path d="M4.3 -3.4 C3.6 -6.4 -4.4 -6.6 -4.4 -2.6 C-4.4 1.2 4.7 -0.7 4.7 3.9 C4.7 7.6 -3.9 7.5 -4.9 4" stroke="#fff" stroke-width="2.2" stroke-linecap="round" fill="none"/><path d="M0 -9.2 L0 -6.2 M0 7 L0 10" stroke="#fff" stroke-width="2.3" stroke-linecap="butt"/></svg>
<div class="t" style="left:1958.00px;top:1230.76px;font-size:27.4px;color:#0a0a0a;-webkit-text-stroke:0.45px #0a0a0a;transform:scaleX(0.9842);">USDC</div>
<div class="t" style="left:1906.20px;top:1275.45px;font-size:23.4px;color:#6b7280;letter-spacing:0.263px;transform:scaleX(1.0337);">Network: ETH Sepolia</div>
<div class="t" style="left:2232.00px;top:1229.87px;font-size:29.4px;color:#0a0a0a;font-weight:700;letter-spacing:0.518px;"><span class="ob">1</span>5 USDC</div>
<div class="t" style="left:2232.00px;top:1272.06px;font-size:27.4px;color:#0a0a0a;letter-spacing:0.521px;-webkit-text-stroke:0.2px #0a0a0a;transform:scaleX(1.0527);">$<span class="o">1</span>5.00</div>
<div class="t" style="left:2491.00px;top:1249.36px;font-size:27.4px;color:#0a0a0a;letter-spacing:0.196px;-webkit-text-stroke:0.2px #0a0a0a;"><span class="o">1</span> USDC = $<span class="o">1</span>.00</div>
<div class="t" style="left:2819.30px;top:1249.36px;font-size:27.4px;color:#141b5c;-webkit-text-stroke:0.6px #141b5c;">0x</div>
<div class="b" style="left:279.1px;top:1373.2px;width:51.0px;height:51.0px;background:#fae8ef;border-radius:26px;"></div>
<svg class="b" style="left:292.6px;top:1386.7px;" width="24" height="24" viewBox="-12 -12 24 24" fill="none"><path d="M-7.2 7.45 L7 -6.85 M-4.1 -6.85 L7 -6.85 L7 3.8" stroke="#e2457c" stroke-width="1.8" stroke-linecap="round" stroke-linejoin="miter"/></svg>
<div class="t" style="left:338.00px;top:1385.34px;font-size:25.7px;color:#0a0a0a;letter-spacing:1.660px;-webkit-text-stroke:0.75px #0a0a0a;transform:scaleX(1.0600);">Withdraw</div>
<div class="t" style="left:543.80px;top:1365.20px;font-size:27.4px;color:#0a0a0a;letter-spacing:0.366px;-webkit-text-stroke:0.2px #0a0a0a;transform:scaleX(1.0395);">Aug-<span class="o">1</span>5, 2025</div>
<div class="t" style="left:543.80px;top:1402.70px;font-size:27.4px;color:#0a0a0a;letter-spacing:0.322px;-webkit-text-stroke:0.2px #0a0a0a;"><span class="o">1</span><span class="o">1</span>:<span class="o">1</span>4 AM</div>
<div class="t" style="left:801.00px;top:1365.20px;font-size:27.4px;color:#0a0a0a;letter-spacing:0.355px;-webkit-text-stroke:0.2px #0a0a0a;transform:scaleX(1.0369);">Aug-22, 2025</div>
<div class="t" style="left:801.00px;top:1402.70px;font-size:27.4px;color:#0a0a0a;-webkit-text-stroke:0.2px #0a0a0a;transform:scaleX(0.9808);">02:25 PM</div>
<div class="b" style="left:1056.0px;top:1392.2px;width:13.0px;height:13.0px;background:#5bbf63;border-radius:7px;"></div>
<div class="t" style="left:1076.40px;top:1387.09px;font-size:20.8px;color:#1c2230;letter-spacing:0.273px;transform:scaleX(1.0354);">Confirmed</div>
<div class="t" style="left:1257.20px;top:1384.10px;font-size:27.4px;color:#0a0a0a;letter-spacing:1.003px;-webkit-text-stroke:0.45px #0a0a0a;transform:scaleX(1.0600);">stg-aug-<span class="o">1</span>5</div>
<svg class="b" style="left:1407.4px;top:1385.2px;" width="26" height="26" viewBox="0 0 26 26" fill="none"><rect x="1.25" y="7.3" width="16.6" height="16.5" rx="4.6" stroke="#4a4b57" stroke-width="2.5"/><path d="M6.7 7.0 L6.7 6.7 Q6.7 1.25 12.2 1.25 L18.2 1.25 Q23.7 1.25 23.7 6.7 L23.7 13.1 Q23.7 18.6 18.2 18.6 L18.1 18.6" stroke="#4a4b57" stroke-width="2.5"/></svg>
<div class="t" style="left:1567.80px;top:1384.10px;font-size:27.4px;color:#0a0a0a;letter-spacing:0.477px;-webkit-text-stroke:0.45px #0a0a0a;transform:scaleX(1.0512);">49d92e...02eddd</div>
<svg class="b" style="left:1799.0px;top:1385.2px;" width="26" height="26" viewBox="0 0 26 26" fill="none"><rect x="1.25" y="7.3" width="16.6" height="16.5" rx="4.6" stroke="#4a4b57" stroke-width="2.5"/><path d="M6.7 7.0 L6.7 6.7 Q6.7 1.25 12.2 1.25 L18.2 1.25 Q23.7 1.25 23.7 6.7 L23.7 13.1 Q23.7 18.6 18.2 18.6 L18.1 18.6" stroke="#4a4b57" stroke-width="2.5"/></svg>
<svg class="b" style="left:1905.0px;top:1359.1px;" width="40" height="40" viewBox="-20 -20 40 40" fill="none"><circle cx="0" cy="0" r="18.9" fill="#4e9f7e"/><ellipse cx="0" cy="0" rx="11.3" ry="2.2" stroke="#fff" stroke-width="1.1" fill="none"/><path d="M-9 -10.3 L9 -10.3 L9 -5.6 L2.5 -5.6 L2.5 11.4 L-2.5 11.4 L-2.5 -5.6 L-9 -5.6 Z" fill="#fff"/><path d="M-2.5 1.9 Q0 2.3 2.5 1.9" stroke="#4e9f7e" stroke-width="0.7" fill="none"/></svg>
<div class="t" style="left:1958.00px;top:1365.20px;font-size:27.4px;color:#0a0a0a;-webkit-text-stroke:0.45px #0a0a0a;transform:scaleX(0.9482);">USDT</div>
<div class="t" style="left:1906.20px;top:1409.89px;font-size:23.4px;color:#6b7280;letter-spacing:0.209px;transform:scaleX(1.0257);">Network: TRX Shasta</div>
<div class="t" style="left:2232.00px;top:1364.31px;font-size:29.4px;color:#0a0a0a;font-weight:700;letter-spacing:0.045px;"><span class="ob">1</span>2 USDT</div>
<div class="t" style="left:2232.00px;top:1406.50px;font-size:27.4px;color:#0a0a0a;letter-spacing:0.521px;-webkit-text-stroke:0.2px #0a0a0a;transform:scaleX(1.0527);">$<span class="o">1</span>2.00</div>
<div class="t" style="left:2491.00px;top:1383.80px;font-size:27.4px;color:#0a0a0a;letter-spacing:0.045px;-webkit-text-stroke:0.2px #0a0a0a;"><span class="o">1</span> USDT = $<span class="o">1</span>.00</div>
<div class="t" style="left:2821.00px;top:1383.80px;font-size:27.4px;color:#141b5c;-webkit-text-stroke:0.6px #141b5c;">TX</div>
<div class="b" style="left:279.1px;top:1507.6px;width:51.0px;height:51.0px;background:#fae8ef;border-radius:26px;"></div>
<svg class="b" style="left:292.6px;top:1521.1px;" width="24" height="24" viewBox="-12 -12 24 24" fill="none"><path d="M-7.2 7.45 L7 -6.85 M-4.1 -6.85 L7 -6.85 L7 3.8" stroke="#e2457c" stroke-width="1.8" stroke-linecap="round" stroke-linejoin="miter"/></svg>
<div class="t" style="left:338.00px;top:1519.78px;font-size:25.7px;color:#0a0a0a;letter-spacing:1.660px;-webkit-text-stroke:0.75px #0a0a0a;transform:scaleX(1.0600);">Withdraw</div>
<div class="t" style="left:543.80px;top:1499.64px;font-size:27.4px;color:#0a0a0a;letter-spacing:0.366px;-webkit-text-stroke:0.2px #0a0a0a;transform:scaleX(1.0395);">Aug-<span class="o">1</span>5, 2025</div>
<div class="t" style="left:543.80px;top:1537.14px;font-size:27.4px;color:#0a0a0a;letter-spacing:0.193px;-webkit-text-stroke:0.2px #0a0a0a;transform:scaleX(1.0210);"><span class="o">1</span><span class="o">1</span>:<span class="o">1</span>0 AM</div>
<div class="t" style="left:801.00px;top:1499.64px;font-size:27.4px;color:#0a0a0a;letter-spacing:0.442px;-webkit-text-stroke:0.2px #0a0a0a;transform:scaleX(1.0464);">Aug-20, 2025</div>
<div class="t" style="left:801.00px;top:1537.14px;font-size:27.4px;color:#0a0a0a;letter-spacing:0.212px;-webkit-text-stroke:0.2px #0a0a0a;">03:0<span class="o">1</span> PM</div>
<div class="b" style="left:1056.0px;top:1526.6px;width:13.0px;height:13.0px;background:#5bbf63;border-radius:7px;"></div>
<div class="t" style="left:1076.40px;top:1521.53px;font-size:20.8px;color:#1c2230;letter-spacing:0.273px;transform:scaleX(1.0354);">Confirmed</div>
<div class="t" style="left:1257.20px;top:1518.54px;font-size:27.4px;color:#0a0a0a;letter-spacing:1.003px;-webkit-text-stroke:0.45px #0a0a0a;transform:scaleX(1.0600);">stg-aug-<span class="o">1</span>5</div>
<svg class="b" style="left:1407.4px;top:1519.6px;" width="26" height="26" viewBox="0 0 26 26" fill="none"><rect x="1.25" y="7.3" width="16.6" height="16.5" rx="4.6" stroke="#4a4b57" stroke-width="2.5"/><path d="M6.7 7.0 L6.7 6.7 Q6.7 1.25 12.2 1.25 L18.2 1.25 Q23.7 1.25 23.7 6.7 L23.7 13.1 Q23.7 18.6 18.2 18.6 L18.1 18.6" stroke="#4a4b57" stroke-width="2.5"/></svg>
<div class="t" style="left:1567.80px;top:1518.54px;font-size:27.4px;color:#0a0a0a;letter-spacing:1.200px;-webkit-text-stroke:0.45px #0a0a0a;transform:scaleX(1.0600);">a<span class="o">1</span>b2c3...d4e5f6</div>
<svg class="b" style="left:1795.8px;top:1519.6px;" width="26" height="26" viewBox="0 0 26 26" fill="none"><rect x="1.25" y="7.3" width="16.6" height="16.5" rx="4.6" stroke="#4a4b57" stroke-width="2.5"/><path d="M6.7 7.0 L6.7 6.7 Q6.7 1.25 12.2 1.25 L18.2 1.25 Q23.7 1.25 23.7 6.7 L23.7 13.1 Q23.7 18.6 18.2 18.6 L18.1 18.6" stroke="#4a4b57" stroke-width="2.5"/></svg>
<svg class="b" style="left:1905.0px;top:1493.5px;" width="40" height="40" viewBox="-20 -20 40 40" fill="none"><circle cx="0" cy="0" r="18.9" fill="#4240c4"/><path d="M0 -12 L7.9 1 L0 4.6 L-7.9 1 Z" fill="#fff"/><path d="M-7.6 2.3 L0 6 L7.6 2.3 L0 11.8 Z" fill="#fff"/></svg>
<div class="t" style="left:1958.00px;top:1499.64px;font-size:27.4px;color:#0a0a0a;-webkit-text-stroke:0.45px #0a0a0a;transform:scaleX(0.8851);">ETH</div>
<div class="t" style="left:1906.20px;top:1544.33px;font-size:23.4px;color:#6b7280;letter-spacing:0.263px;transform:scaleX(1.0337);">Network: ETH Sepolia</div>
<div class="t" style="left:2232.00px;top:1498.75px;font-size:29.4px;color:#0a0a0a;font-weight:700;letter-spacing:0.410px;transform:scaleX(1.0381);">0.3550<span class="ob">1</span> ETH</div>
<div class="t" style="left:2232.00px;top:1540.94px;font-size:27.4px;color:#0a0a0a;letter-spacing:0.190px;-webkit-text-stroke:0.2px #0a0a0a;transform:scaleX(1.0200);">$<span class="o">1</span>,493.88</div>
<div class="t" style="left:2491.00px;top:1518.24px;font-size:27.4px;color:#0a0a0a;letter-spacing:-0.211px;-webkit-text-stroke:0.2px #0a0a0a;"><span class="o">1</span> ETH = $4,207.95</div>
<div class="t" style="left:2819.30px;top:1518.24px;font-size:27.4px;color:#141b5c;-webkit-text-stroke:0.6px #141b5c;">0x</div>
</div></div>
<div class="b" style="left:2331.0px;top:1546.7px;width:64.0px;height:64.0px;background:#0a1659;border-radius:32px;"></div>
<div class="t" style="left:2359.14px;top:1566.68px;font-size:24px;color:#fff;-webkit-text-stroke:0.6px #fff;"><span class="o">1</span></div>
<div class="t" style="left:2423.32px;top:1566.68px;font-size:24px;color:#6b7280;">2</div>
<div class="t" style="left:2490.32px;top:1566.68px;font-size:24px;color:#6b7280;">3</div>
<svg class="b" style="left:2270.0px;top:1540.0px;" width="320" height="80" viewBox="0 0 320 80" fill="none"><path d="M30.5 30.9 L21.7 39.1 L30.5 47.3" stroke="#9ca0a8" stroke-width="2.6" stroke-linecap="round" stroke-linejoin="round"/><path d="M289.5 30.9 L298.8 39.1 L289.5 47.3" stroke="#414957" stroke-width="2.6" stroke-linecap="round" stroke-linejoin="round"/></svg>
<div class="b" style="left:2599.5px;top:1553.2px;width:240.0px;height:52.3px;background:#fff;border-radius:13px;border:1.2px solid #e4e6ec;box-sizing:border-box;"></div>
<div class="t" style="left:2620.80px;top:1566.68px;font-size:24px;color:#14171f;letter-spacing:0.241px;transform:scaleX(1.0290);">20 per page</div>
<svg class="b" style="left:2790.0px;top:1565.0px;" width="30" height="30" viewBox="0 0 30 30" fill="none"><path d="M5.7 9.6 L14.1 18.3 L22.4 9.6" stroke="#414957" stroke-width="2.6" stroke-linecap="round" stroke-linejoin="round"/></svg>
</div></div>
</div></body></html>
